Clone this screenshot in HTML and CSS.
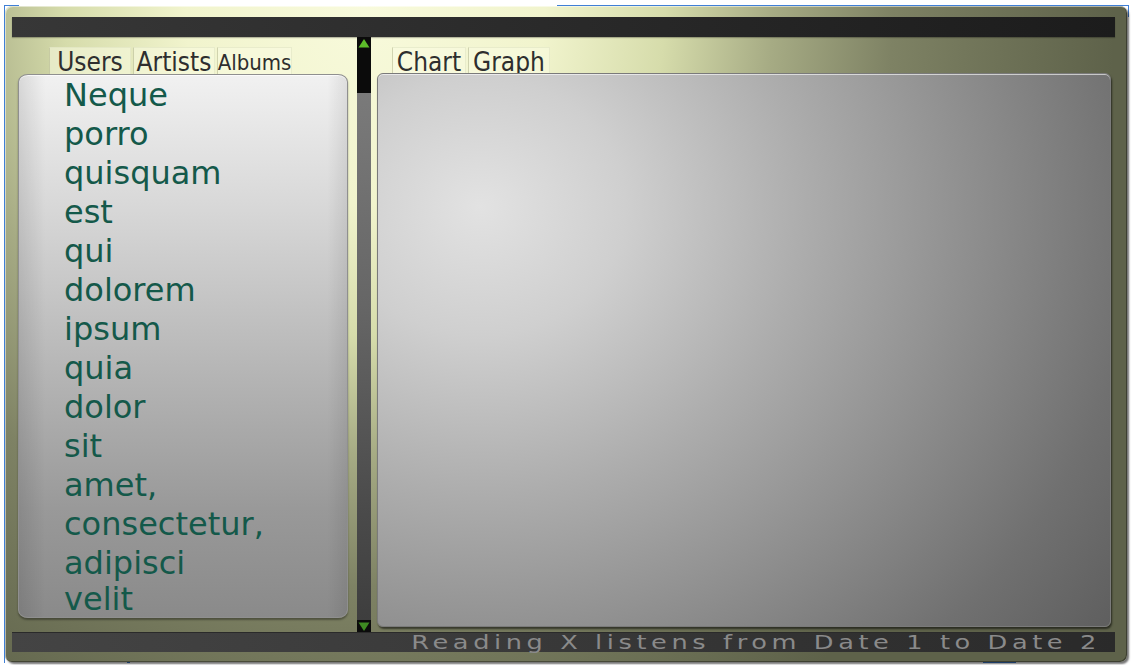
FILE: index.html
```html
<!DOCTYPE html>
<html>
<head>
<meta charset="utf-8">
<link rel="stylesheet" href="styles.css">
</head>
<body>
<div class="sel sel-top-a"></div>
<div class="sel sel-top-b"></div>
<div class="sel sel-left"></div>
<div class="sel sel-right"></div>
<div class="sel sel-bot-a"></div>
<div class="sel sel-bot-b"></div>
<div class="frame">
  <div class="topbar"></div>
  <div class="main">
    <div class="leftcol">
      <div class="tabs tabs-left">
        <div class="tab tab-users">Users</div>
        <div class="tab tab-artists">Artists</div>
        <div class="tab tab-albums">Albums</div>
      </div>
      <div class="listpanel">
        <div class="item">Neque</div>
        <div class="item">porro</div>
        <div class="item">quisquam</div>
        <div class="item">est</div>
        <div class="item">qui</div>
        <div class="item">dolorem</div>
        <div class="item">ipsum</div>
        <div class="item">quia</div>
        <div class="item">dolor</div>
        <div class="item">sit</div>
        <div class="item">amet,</div>
        <div class="item">consectetur,</div>
        <div class="item">adipisci</div>
        <div class="item">velit</div>
      </div>
    </div>
    <div class="scrollbar">
      <div class="arrow arrow-up"><svg width="14" height="13" viewBox="0 0 14 13"><polygon points="7,2 12.5,10.5 1.5,10.5" fill="#5cbc2a"/></svg></div>
      <div class="thumb"></div>
      <div class="track"></div>
      <div class="arrow arrow-down"><svg width="14" height="13" viewBox="0 0 14 13"><polygon points="1.5,2.5 12.5,2.5 7,11" fill="#3e8a22"/></svg></div>
    </div>
    <div class="rightcol">
      <div class="tabs tabs-right">
        <div class="tab tab-chart">Chart</div>
        <div class="tab tab-graph">Graph</div>
      </div>
      <div class="chartpanel"></div>
    </div>
  </div>
  <div class="statusbar"><span class="status">Reading X listens from Date 1 to Date 2</span></div>
</div>
</body>
</html>
```

FILE: styles.css
```css
html, body {
  margin: 0;
  padding: 0;
  background: #ffffff;
  width: 1134px;
  height: 665px;
  overflow: hidden;
}

body {
  position: relative;
  font-family: "DejaVu Sans", "Liberation Sans", sans-serif;
}

.sel {
  position: absolute;
  background: #3f7fd6;
}
.sel-top-a { left: 4px; top: 5px; width: 15px; height: 1px; }
.sel-top-b { left: 557px; top: 5px; width: 572px; height: 1px; }
.sel-left { left: 4px; top: 5px; width: 1px; height: 658px; }
.sel-right { left: 1128px; top: 5px; width: 1px; height: 12px; }
.sel-bot-a { left: 127px; top: 662px; width: 3px; height: 1px; }
.sel-bot-b { left: 983px; top: 662px; width: 33px; height: 1px; }

.frame {
  position: relative;
  margin: 6px 0 0 5px;
  width: 1122px;
  height: 656px;
  box-sizing: border-box;
  padding: 11px 12px 10px 7px;
  border-radius: 7px;
  background: radial-gradient(ellipse 600px 660px at 360px 0px, #f8fadc 0%, #f1f4cd 30%, #d6dcab 50%, #a6ab84 68%, #7e8264 88%, #73775b 100%, #5e624a 125%);
  box-shadow: inset 1px 1px 0 rgba(255,255,255,0.5), inset -1px -1px 0 rgba(0,0,0,0.35), 2px 2px 2px rgba(0,0,0,0.55);
  display: flex;
  flex-direction: column;
}

.topbar {
  height: 20px;
  background: linear-gradient(to right, #373737, #1c1c1c);
  box-shadow: 0 1px 1px rgba(0,0,0,0.25);
}

.main {
  height: 595px;
  display: flex;
}

.leftcol {
  width: 345px;
  box-sizing: border-box;
  padding: 10px 9px 0 6px;
  display: flex;
  flex-direction: column;
}

.tabs {
  display: flex;
  height: 27px;
  gap: 2px;
}
.tabs-left { padding-left: 31px; }
.tabs-right { padding-left: 15px; height: 26px; }

.tab {
  box-sizing: border-box;
  height: 27px;
  padding: 2px 3px 0 3px;
  background: rgba(250, 252, 225, 0.55);
  border-left: 1px solid rgba(160, 165, 120, 0.45);
  border-top: 1px solid rgba(220, 225, 190, 0.5);
  border-right: 1px solid rgba(220, 225, 190, 0.5);
  color: #2e2e2e;
  font-family: "DejaVu Sans Condensed", "DejaVu Sans", sans-serif;
  font-size: 26px;
  line-height: 24px;
  white-space: nowrap;
  display: flex;
  justify-content: center;
}
.tab-users { width: 82px; }
.tab-artists { width: 82px; }
.tab-albums { width: 75px; font-size: 22px; line-height: 26px; }
.tab-chart { width: 74px; height: 26px; }
.tab-graph { width: 82px; height: 26px; }

.listpanel {
  height: 544px;
  box-sizing: border-box;
  padding: 1px 0 0 45px;
  border-radius: 10px / 8px;
  background:
    linear-gradient(to right, rgba(0,0,0,0.10), rgba(0,0,0,0) 8%, rgba(0,0,0,0) 94%, rgba(0,0,0,0.08)),
    linear-gradient(to bottom, #f1f1f1 0%, #d7d7d7 25%, #b5b5b5 55%, #999999 80%, #8a8a8a 100%);
  border: 1px solid #8f8f8f;
  box-shadow: 0 2px 2px rgba(0,0,0,0.35), inset 0 1px 0 rgba(255,255,255,0.7);
  overflow: hidden;
}

.item {
  font-family: "DejaVu Sans", sans-serif;
  font-size: 32px;
  line-height: 39px;
  color: #14594a;
  white-space: nowrap;
}
.item:last-child {
  line-height: 33px;
}

.scrollbar {
  width: 14px;
  height: 596px;
  display: flex;
  flex-direction: column;
}
.arrow {
  height: 13px;
  background: #0b0b0b;
}
.arrow svg { display: block; }
.thumb {
  height: 43px;
  background: #0b0b0b;
}
.track {
  flex: 1;
  background: linear-gradient(to bottom, #7a7a7a 0%, #666666 40%, #4a4a4a 80%, #3e3e3e 100%);
}

.rightcol {
  width: 734px;
  margin-left: 6px;
  padding-top: 10px;
  display: flex;
  flex-direction: column;
}

.chartpanel {
  height: 554px;
  box-sizing: border-box;
  border-radius: 6px;
  border: 1px solid #7a7a7a;
  background: radial-gradient(ellipse 110% 130% at 14% 24%, #e2e2e2 0%, #cfcfcf 18%, #adadad 40%, #8d8d8d 62%, #707070 82%, #5c5c5c 100%);
  box-shadow: 1px 2px 2px rgba(0,0,0,0.55), inset 0 1px 0 rgba(255,255,255,0.6);
}

.statusbar {
  height: 20px;
  box-sizing: border-box;
  background: linear-gradient(to right, #444444, #383838 50%, #2a2a2a);
  border-top: 1px solid #2a2a2a;
  display: flex;
  justify-content: flex-end;
  align-items: center;
  padding-right: 14px;
}

.status {
  font-family: "DejaVu Sans", sans-serif;
  font-size: 19px;
  letter-spacing: 3.4px;
  color: #8a8a8a;
  line-height: 19px;
  white-space: nowrap;
  transform: scaleX(1.35);
  transform-origin: right center;
}
```
